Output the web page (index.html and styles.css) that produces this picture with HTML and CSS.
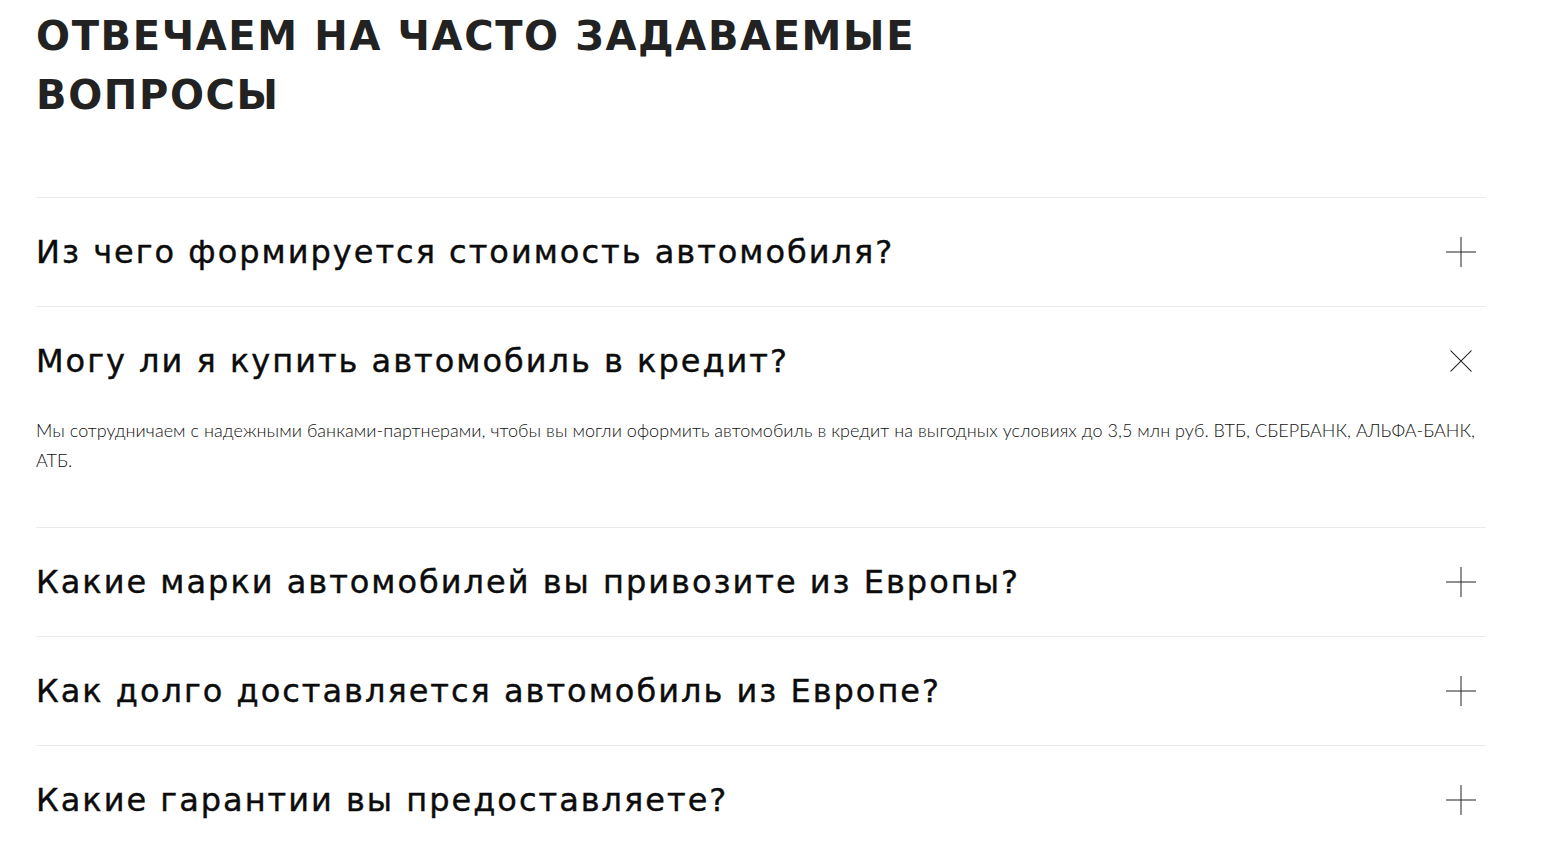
FILE: index.html
```html
<!DOCTYPE html>
<html lang="ru">
<head>
    <meta charset="UTF-8">
    <meta name="viewport" content="width=device-width, initial-scale=1.0">
    <title>Ответы на вопросы</title>
    <link rel="stylesheet" href="styles.css">
</head>
<body>
    <section class="faq">
        <h2 class="faq_title">Отвечаем на часто задаваемые<br>вопросы</h2>

        <div class="faq_list">
            <div class="faq_item">
                <div class="faq_question">
                    <span>Из чего формируется стоимость автомобиля?</span>
                    <svg class="faq_icon" viewBox="0 0 30 30"><path d="M15 0V30M0 15H30"/></svg>
                </div>
            </div>

            <div class="faq_item open">
                <div class="faq_question">
                    <span>Могу ли я купить автомобиль в кредит?</span>
                    <svg class="faq_icon" viewBox="0 0 30 30"><path d="M15 0V30M0 15H30"/></svg>
                </div>
                <div class="faq_answer">
                    Мы сотрудничаем с надежными банками-партнерами, чтобы вы могли оформить автомобиль в кредит на выгодных условиях до 3,5 млн руб. ВТБ, СБЕРБАНК, АЛЬФА-БАНК, АТБ.
                </div>
            </div>

            <div class="faq_item">
                <div class="faq_question">
                    <span>Какие марки автомобилей вы привозите из Европы?</span>
                    <svg class="faq_icon" viewBox="0 0 30 30"><path d="M15 0V30M0 15H30"/></svg>
                </div>
            </div>

            <div class="faq_item">
                <div class="faq_question">
                    <span>Как долго доставляется автомобиль из Европе?</span>
                    <svg class="faq_icon" viewBox="0 0 30 30"><path d="M15 0V30M0 15H30"/></svg>
                </div>
            </div>

            <div class="faq_item">
                <div class="faq_question">
                    <span>Какие гарантии вы предоставляете?</span>
                    <svg class="faq_icon" viewBox="0 0 30 30"><path d="M15 0V30M0 15H30"/></svg>
                </div>
            </div>
        </div>
    </section>
</body>
</html>
```

FILE: styles.css
```css
body {
    margin: 0;
    background: #ffffff;
    color: #111111;
    font-family: "DejaVu Sans", sans-serif;
}

.faq {
    width: 1450px;
    padding: 7px 0 0 36px;
}

.faq_title {
    margin: 0 0 72px 0;
    font-size: 40px;
    line-height: 59px;
    font-weight: 700;
    text-transform: uppercase;
    letter-spacing: 1.65px;
    color: #222222;
}

.faq_item {
    border-top: 1px solid #ebebeb;
}

.faq_question {
    display: flex;
    align-items: center;
    justify-content: space-between;
    height: 108px;
    font-size: 32px;
    letter-spacing: 2px;
    -webkit-text-stroke: 0.4px #0c0c0c;
    color: #0c0c0c;
    cursor: pointer;
}

.faq_icon {
    width: 30px;
    height: 30px;
    margin-right: 10px;
    stroke: #222222;
    stroke-width: 1;
    fill: none;
}

.open .faq_icon {
    transform: rotate(45deg);
}

.faq_answer {
    padding: 0 0 52px 0;
    font-family: "Lato", sans-serif;
    font-weight: 300;
    font-size: 18px;
    line-height: 30px;
    letter-spacing: 0.05px;
    color: #111111;
}
```
